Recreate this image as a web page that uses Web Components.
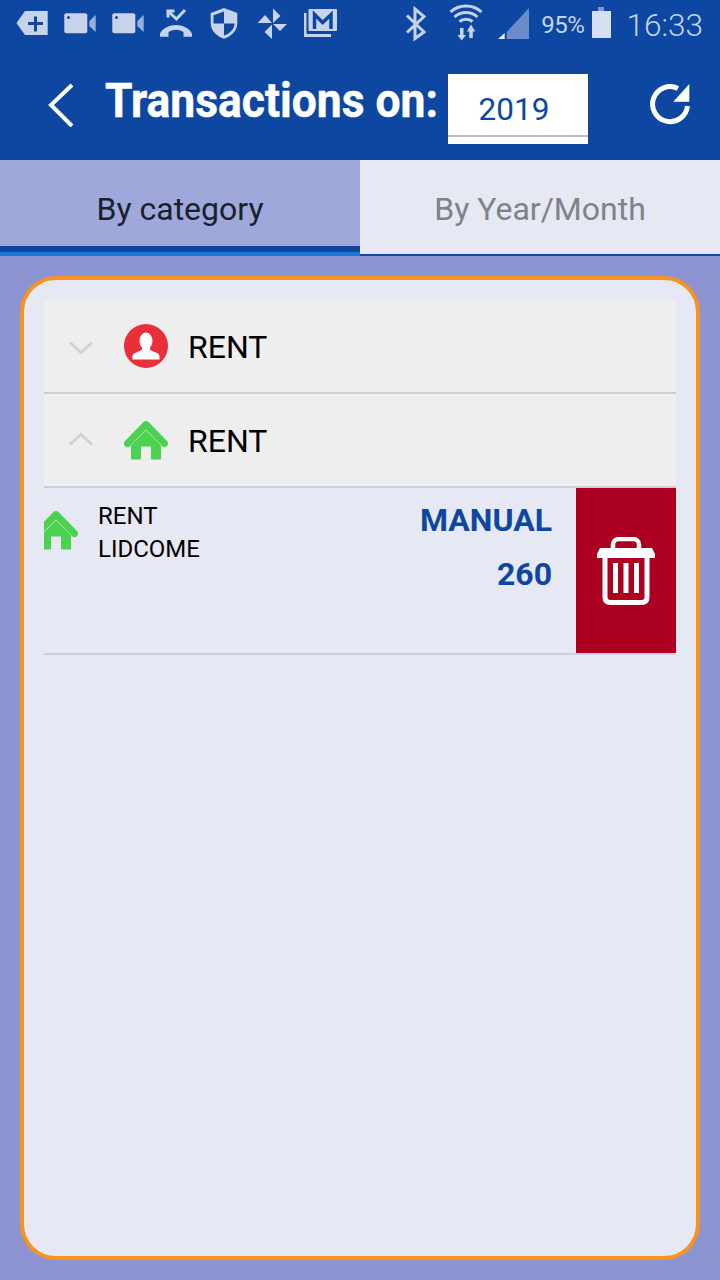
<!DOCTYPE html>
<html>
<head>
<meta charset="utf-8">
<title>Transactions</title>
<style>
    html, body { margin: 0; padding: 0; }
    body { width: 720px; height: 1280px; overflow: hidden; background: #8c94d2; font-family: Roboto, "Liberation Sans", sans-serif; }
</style>
</head>
<body>
<status-bar></status-bar>
<app-header title-text="Transactions on:" year="2019"></app-header>
<tab-bar first="By category" second="By Year/Month"></tab-bar>
<list-card>
    <category-row icon="person" label="RENT"></category-row>
    <category-row icon="house" label="RENT" open></category-row>
    <txn-item source="MANUAL" amount="260">
        <span>RENT</span>
        <span>LIDCOME</span>
    </txn-item>
</list-card>

<script>
const HOUSE = `
    <path d="M3.500 22.500 22 3.500 40.500 22.500" fill="none" stroke="#4cd250" stroke-width="7" stroke-linecap="round" stroke-linejoin="round"/>
    <path d="M7 24.300 22 9.300 37 24.300V38.500H27V25.500H17V38.500H7Z" fill="#4cd250"/>`;

class StatusBar extends HTMLElement {
    constructor() {
        super();
        this.attachShadow({ mode: 'open' });
        // viewBox x values are the screen x of each icon, easier to read off the reference
        this.shadowRoot.innerHTML = `
        <style>
            :host { display: flex; height: 50px; padding: 0 17px 0 16px; background: #0d47a1; color: #c6d3ea; align-items: center; }
            svg { display: block; width: 34px; height: 50px; fill: #c6d3ea; flex: none; }
            .left { display: flex; gap: 14px; }
            .right { display: flex; align-items: center; margin-left: auto; }
            .pct { font-size: 24px; margin-left: 11px; letter-spacing: -.4px; }
            .time { font-size: 31.500px; font-weight: 300; margin-left: 15px; }
        </style>
        <div class="left">
            <svg viewBox="16 0 34 50">
                <path d="M16.500 23 25 11H47.700V35H25Z"/>
                <path d="M28 22H43V25H28Z M34 16.500H37V31.500H34Z" fill="#0d47a1"/>
            </svg>
            <svg viewBox="64 0 34 50">
                <rect x="64.300" y="13.300" width="23" height="20" rx="2"/>
                <circle cx="68.500" cy="17.500" r="1.500" fill="#0d47a1"/>
                <path d="M89.300 21 95.700 15V32L89.300 26Z" opacity=".75"/>
            </svg>
            <svg viewBox="112 0 34 50">
                <rect x="112.300" y="13.300" width="23" height="20" rx="2"/>
                <circle cx="116.500" cy="17.500" r="1.500" fill="#0d47a1"/>
                <path d="M137.300 21 143.700 15V32L137.300 26Z" opacity=".75"/>
            </svg>
            <svg viewBox="160 0 34 50">
                <path d="M160 33.500C166 22 186 22 192 33.500V36.700H183.500V32C178.500 29 173.500 29 168.500 32V36.700H160Z"/>
                <path d="M185 10 176.500 19 169.500 12.500M168 17.500V11H174.500" fill="none" stroke="#c6d3ea" stroke-width="3"/>
            </svg>
            <svg viewBox="208 0 34 50">
                <path d="M224 8 237.300 13V23C237.300 31 231 36.500 224 38.700 217 36.500 210.700 31 210.700 23V13Z"/>
                <path d="M224 11.500 213.500 15.300V23.500H224ZM224 23.500V35.500C229.500 33.500 234.500 29.500 234.500 23.500Z" fill="#0d47a1"/>
            </svg>
            <svg viewBox="256 0 34 50">
                <path d="M273 8.500 280.500 16 273 23Z M287 24 280 31 273 24Z M272 39 264.500 32 272 24.500Z M257.500 23 265 15 272 23Z"/>
            </svg>
            <svg viewBox="304 0 34 50">
                <rect x="308.500" y="9" width="28.500" height="22" rx="1"/>
                <path d="M314.500 29V14.500L322.700 22.500 331 14.500V29" fill="none" stroke="#0d47a1" stroke-width="3.500"/>
                <path d="M305 13V35.500H331" fill="none" stroke="#c6d3ea" stroke-width="3"/>
            </svg>
        </div>
        <div class="right">
            <svg viewBox="404 0 22 50" style="width:22px">
                <path d="M406 15.500 423 32 414 38.500V9L423 16.500 406 32.500" fill="none" stroke="#c6d3ea" stroke-width="3"/>
            </svg>
            <svg viewBox="447 0 36 50" style="width:36px;margin-left:21px">
                <path d="M449.500 12C458 4 472 4 480.500 12M453.500 17C460 11 470 11 476.500 17M458.500 21.500C462 18.500 468 18.500 471.500 21.500" fill="none" stroke="#c6d3ea" stroke-width="3"/>
                <path d="M459 28H462.500V35H465L460.700 40.500 456.500 35H459ZM468.300 38H471.800V31.500H474.300L470 24.500 465.800 31.500H468.300Z"/>
            </svg>
            <svg viewBox="497 0 32 50" style="width:32px;margin-left:14px">
                <path d="M505.700 32 528 8V39H505.700Z" fill="#6b8cc8"/>
                <path d="M497 39 503.700 33V39Z" fill="#e6ecf6"/>
            </svg>
            <span class="pct">95%</span>
            <svg viewBox="592 0 19 50" style="width:19px;margin-left:8px">
                <rect x="598" y="7" width="6" height="4" opacity=".6"/>
                <rect x="592" y="11" width="19" height="27" fill="#d6e0f0"/>
            </svg>
            <span class="time">16:33</span>
        </div>`;
    }
}

class AppHeader extends HTMLElement {
    constructor() {
        super();
        this.attachShadow({ mode: 'open' });
        this.shadowRoot.innerHTML = `
        <style>
            :host { display: flex; height: 110px; background: #0d47a1; color: #fff; box-sizing: border-box; padding: 24px 0 16px 48px; }
            svg { display: block; flex: none; }
            .back { width: 26px; height: 44px; margin-top: 9px; }
            h1 { margin: 0 0 0 31px; width: 343px; flex: none; font-size: 48px; line-height: 54px; font-weight: 700; white-space: nowrap; -webkit-text-stroke: .5px #fff; transform: scaleX(.925); transform-origin: 0 0; }
            .year { width: 140px; height: 70px; flex: none; box-sizing: border-box; background: #fff; color: #0d47a1; font-size: 31.500px; text-align: center; padding: 18px 8px 0 0; line-height: 36px; position: relative; }
            .year::after { content: ""; position: absolute; left: 0; right: 0; top: 61px; height: 2px; background: #bdbdbd; }
            .reload { width: 44px; height: 44px; margin: 7px 0 0 60px; }
        </style>
        <svg class="back" viewBox="0 0 26 44"><path d="M24 2 3 22 24 43" fill="none" stroke="#fff" stroke-width="4"/></svg>
        <h1></h1>
        <div class="year"></div>
        <svg class="reload" viewBox="0 0 44 44">
            <path d="M39.500 25A17.500 17.500 0 1 1 30 7.500" fill="none" stroke="#fff" stroke-width="5"/>
            <path d="M41.300 3V20.700H25.300Z" fill="#fff"/>
        </svg>`;
    }
    connectedCallback() {
        this.shadowRoot.querySelector('h1').textContent = this.getAttribute('title-text');
        this.shadowRoot.querySelector('.year').textContent = this.getAttribute('year');
    }
}

class TabBar extends HTMLElement {
    constructor() {
        super();
        this.attachShadow({ mode: 'open' });
        this.shadowRoot.innerHTML = `
        <style>
            :host { display: grid; grid-template-columns: 1fr 1fr; height: 96px; font-size: 32px; }
            div { display: flex; align-items: center; justify-content: center; box-sizing: border-box; }
            .on { background: #9fa8da; color: #1a1f2e; border-bottom: 4px solid #1976d2; box-shadow: inset 0 -6px 0 #0d47a1; padding-top: 6px; }
            .off { background: #e6e8f4; color: #808285; border-bottom: 2px solid #0d47a1; padding-top: 4px; }
        </style>
        <div class="on"></div>
        <div class="off"></div>`;
    }
    connectedCallback() {
        this.shadowRoot.querySelector('.on').textContent = this.getAttribute('first');
        this.shadowRoot.querySelector('.off').textContent = this.getAttribute('second');
    }
}

class ListCard extends HTMLElement {
    constructor() {
        super();
        this.attachShadow({ mode: 'open' });
        this.shadowRoot.innerHTML = `
        <style>
            :host { display: flex; flex-direction: column; box-sizing: border-box; width: 680px; height: 984px; margin: 20px 20px 0; padding: 20px; background: #e6e8f4; border: 4px solid #f7931e; border-radius: 36px; }
        </style>
        <slot></slot>`;
    }
}

class CategoryRow extends HTMLElement {
    constructor() {
        super();
        this.attachShadow({ mode: 'open' });
        this.shadowRoot.innerHTML = `
        <style>
            :host { display: flex; align-items: center; height: 94px; box-sizing: border-box; padding-left: 24px; background: #eee; border-bottom: 2px solid #cdcfda; font-size: 32px; color: #000; }
            svg { display: block; flex: none; }
            .chev { width: 26px; height: 14px; margin-right: 30px; }
            .icon { width: 44px; margin-right: 20px; }
            span { padding-top: 2px; }
        </style>
        <svg class="chev" viewBox="0 0 26 14"><path fill="none" stroke="#d2d2d2" stroke-width="3"/></svg>
        <svg class="icon"></svg>
        <span></span>`;
    }
    connectedCallback() {
        const root = this.shadowRoot;
        const chev = root.querySelector('.chev');
        const open = this.hasAttribute('open');
        chev.style[open ? 'marginBottom' : 'marginTop'] = '3px';
        chev.querySelector('path').setAttribute('d', open ? 'M2 12.500 13 2.500 24 12.500' : 'M2 1.500 13 11.500 24 1.500');
        const icon = root.querySelector('.icon');
        if (this.getAttribute('icon') === 'house') {
            icon.setAttribute('viewBox', '0 0 44 39');
            icon.setAttribute('height', '39');
            icon.innerHTML = HOUSE;
        } else {
            icon.setAttribute('viewBox', '0 0 44 44');
            icon.setAttribute('height', '44');
            icon.innerHTML = `
                <circle cx="22" cy="22" r="22" fill="#e8303a"/>
                <ellipse cx="22" cy="17" rx="6.500" ry="8.500" fill="#fff"/>
                <path d="M8.500 35.500V32C9 28 15 28.500 18 25.500V23H26V25.500C29 28.500 35 28 35.500 32V35.500Z" fill="#fff"/>`;
        }
        root.querySelector('span').textContent = this.getAttribute('label');
    }
}

class TxnItem extends HTMLElement {
    constructor() {
        super();
        this.attachShadow({ mode: 'open' });
        this.shadowRoot.innerHTML = `
        <style>
            :host { display: flex; height: 167px; box-sizing: border-box; border-bottom: 2px solid #cdcfda; color: #000; }
            svg { display: block; flex: none; }
            .house { width: 34px; height: 39px; margin-top: 23px; }
            .text { display: flex; flex-direction: column; margin: 12px 0 0 20px; font-size: 24px; line-height: 33px; }
            ::slotted(span) { display: block; }
            .vals { margin: 5px 24px 0 auto; text-align: right; color: #0d47a1; font-size: 32px; font-weight: 700; line-height: 54px; }
            .del { display: flex; align-items: center; justify-content: center; width: 100px; height: 165px; flex: none; background: #ad0021; }
        </style>
        <svg class="house" viewBox="10 0 34 39">${HOUSE}</svg>
        <div class="text"><slot></slot></div>
        <div class="vals"><div class="source"></div><div class="amount"></div></div>
        <div class="del">
            <svg width="58" height="68" viewBox="0 0 58 68">
                <path d="M16 11V7.500C16 4 19 2 22 2H36C39 2 42 4 42 7.500V11" fill="none" stroke="#fff" stroke-width="4.500"/>
                <path d="M3 11H55L58 17V21H0V17Z" fill="#fff"/>
                <path d="M8 20V60C8 63.500 10 65.500 13.500 65.500H44.500C48 65.500 50 63.500 50 60V20" fill="none" stroke="#fff" stroke-width="5"/>
                <path d="M16 26H21V56H16ZM26.500 26H31.500V56H26.500ZM37 26H42V56H37Z" fill="#fff"/>
            </svg>
        </div>`;
    }
    connectedCallback() {
        this.shadowRoot.querySelector('.source').textContent = this.getAttribute('source');
        this.shadowRoot.querySelector('.amount').textContent = this.getAttribute('amount');
    }
}

customElements.define('status-bar', StatusBar);
customElements.define('app-header', AppHeader);
customElements.define('tab-bar', TabBar);
customElements.define('list-card', ListCard);
customElements.define('category-row', CategoryRow);
customElements.define('txn-item', TxnItem);
</script>
</body>
</html>
